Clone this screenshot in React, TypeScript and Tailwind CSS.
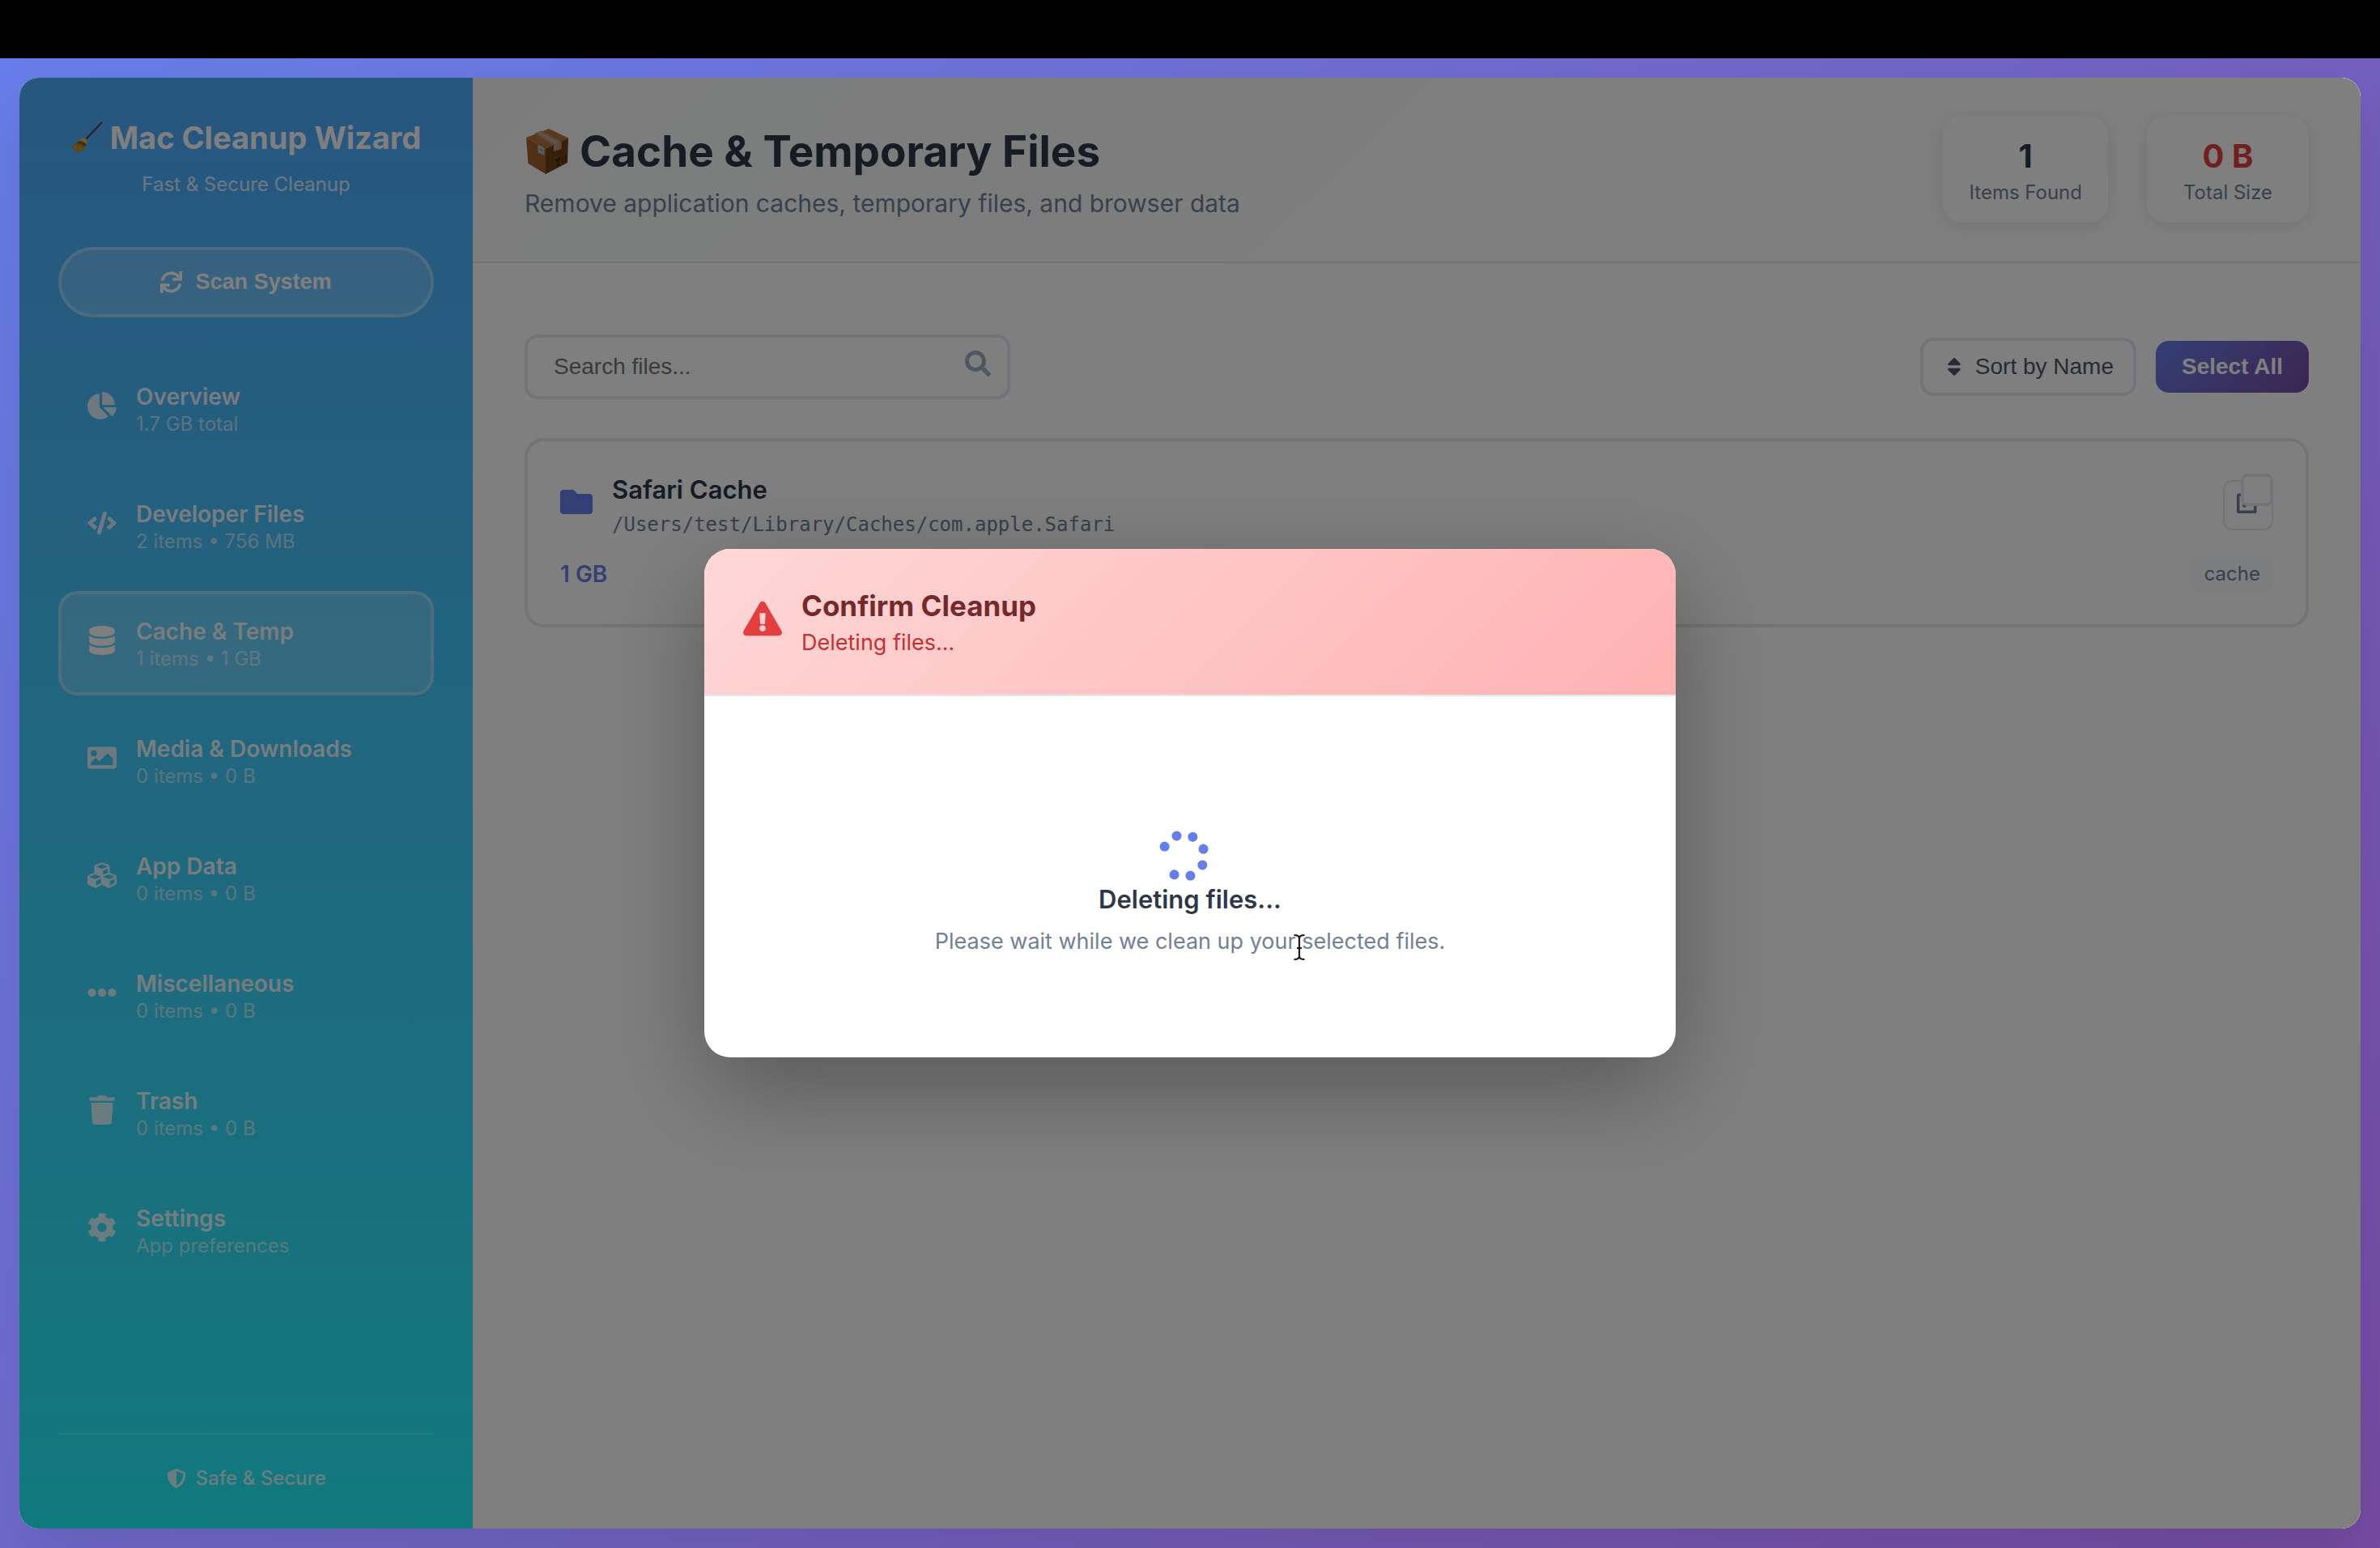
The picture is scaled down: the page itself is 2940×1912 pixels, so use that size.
import type { ReactNode } from "react";
import type { IconType } from "react-icons";
import {
  FaChartPie,
  FaCode,
  FaCog,
  FaCubes,
  FaDatabase,
  FaEllipsisH,
  FaExclamationTriangle,
  FaExternalLinkAlt,
  FaFolder,
  FaImage,
  FaSearch,
  FaShieldAlt,
  FaSort,
  FaSpinner,
  FaSync,
  FaTrash,
} from "react-icons/fa";

type NavEntry = { name: string; detail: string; Icon: IconType; active?: boolean };

const navEntries: NavEntry[] = [
  { name: "Overview", detail: "1.7 GB total", Icon: FaChartPie },
  { name: "Developer Files", detail: "2 items • 756 MB", Icon: FaCode },
  { name: "Cache & Temp", detail: "1 items • 1 GB", Icon: FaDatabase, active: true },
  { name: "Media & Downloads", detail: "0 items • 0 B", Icon: FaImage },
  { name: "App Data", detail: "0 items • 0 B", Icon: FaCubes },
  { name: "Miscellaneous", detail: "0 items • 0 B", Icon: FaEllipsisH },
  { name: "Trash", detail: "0 items • 0 B", Icon: FaTrash },
  { name: "Settings", detail: "App preferences", Icon: FaCog },
];

function Broom() {
  return (
    <svg viewBox="0 0 40 40" className="size-10 shrink-0" aria-hidden="true">
      <path d="M37.5 1.5 L19 21" stroke="#5a3a30" strokeWidth="2" strokeLinecap="round" />
      <path d="M12 21 C15 19.5 19 20.5 19.5 25 C19 30 15 36 11 39 C7 38 2 34 0.5 30 C5 28 9 25 12 21Z" fill="#b38a2c" />
      <path d="M12 21 C15 19.5 19 20.5 19.5 25 L18.5 28 C16 25.5 13 24 9.5 24Z" fill="#d9bd5e" />
      <path d="M9.5 24 C13 24 16 25.5 18.5 28 L17 31.5 C14 28.5 10 27 6.5 26.8Z" fill="#8a5a24" />
      <path d="M5 30 L8 35 M9 30 L12 36 M3 30 L5 33" stroke="#d8b24a" strokeWidth="1" />
    </svg>
  );
}

function Parcel() {
  return (
    <svg viewBox="0 0 56 60" className="h-[60px] w-14 shrink-0" aria-hidden="true">
      <path d="M2 13 L30 2 L54 13.5 L26 26.5Z" fill="#b0713e" />
      <path d="M2 13 L26 26.5 V58 L4.5 45Z" fill="#a5612f" />
      <path d="M26 26.5 L54 13.5 L53 44 L26 58Z" fill="#6f4318" />
      <path d="M12.5 7.5 L20.5 4.5 L45.5 18 V27 L36 30 V22.5Z" fill="#b99679" />
      <path d="M15 6.5 L18 5.4 L42 19.5 L39 21Z" fill="#c9ab92" />
      <path d="M16.5 22 L24.5 26 V35 L16.5 31.5Z" fill="#b9b9b4" />
      <path d="M18 27 L23 29.5" stroke="#6d6d6a" strokeWidth="1" />
      <path d="M38.5 40 L44.5 37 C44.5 40 43 42 41.5 42.5 C40 42.5 38.5 42 38.5 40Z" fill="#3c220b" />
      <path d="M41.5 42 V47 M39.5 48 L43.5 46 M47 36.5 V44 M51 34.5 V42" stroke="#3c220b" strokeWidth="1.4" />
    </svg>
  );
}

function Sidebar() {
  return (
    <aside className="flex w-[560px] shrink-0 flex-col bg-linear-to-b from-[#4facfe] to-[#20f2fc] p-12 text-white">
      <div className="flex flex-col items-center gap-3 text-center">
        <h1 className="flex items-center gap-2 text-[38px] leading-[52px] font-bold">
          <Broom />
          Mac Cleanup Wizard
        </h1>
        <p className="text-2xl leading-[40px] opacity-80">Fast &amp; Secure Cleanup</p>
      </div>

      <button
        type="button"
        className="mt-[57px] flex h-[87px] items-center justify-center gap-4 rounded-full border-4 border-white/30 bg-white/20 font-['Liberation_Sans',sans-serif] text-[27px] font-bold"
      >
        <FaSync className="size-[27px]" />
        Scan System
      </button>

      <nav className="mt-12 flex flex-col gap-4">
        {navEntries.map(({ name, detail, Icon, active }) => (
          <a
            key={name}
            href="#"
            className={
              active
                ? "flex items-center gap-6 rounded-3xl border-4 border-white/30 bg-white/20 px-8 py-6"
                : "flex items-center gap-6 rounded-3xl border-4 border-transparent px-8 py-6"
            }
          >
            <span className="pb-2">
              <Icon className={active ? "size-9" : "size-9 opacity-80"} />
            </span>
            <span className="flex flex-col pt-[5px]">
              <span className="text-[28px] leading-[34px] font-semibold opacity-90">{name}</span>
              <span className="text-2xl leading-[34px] opacity-60">{detail}</span>
            </span>
          </a>
        ))}
      </nav>

      <div className="mt-auto flex items-center justify-center gap-3 border-t-2 border-white/20 pt-10 text-2xl leading-[28px] font-medium">
        <FaShieldAlt className="size-6 opacity-80" />
        <span className="opacity-80">Safe &amp; Secure</span>
      </div>
    </aside>
  );
}

function Stat({ value, label, danger }: { value: string; label: string; danger?: boolean }) {
  return (
    <div className="flex min-w-[200px] flex-col items-center gap-1 rounded-3xl bg-white px-8 pt-[26px] pb-5 shadow-[0_4px_20px_rgba(0,0,0,0.1)]">
      <span className={danger ? "text-[40px] leading-[48px] font-bold text-[#e53e3e]" : "text-[40px] leading-[48px] font-bold text-[#2d3748]"}>
        {value}
      </span>
      <span className="text-2xl leading-[34px] text-[#718096]">{label}</span>
    </div>
  );
}

function Toolbar() {
  return (
    <div className="flex items-center justify-between gap-6">
      <div className="relative w-[600px]">
        <input
          type="text"
          aria-label="Search files"
          placeholder="Search files..."
          className="h-20 w-full rounded-2xl border-4 border-[#e2e8f0] bg-white px-8 font-['Liberation_Sans',sans-serif] text-[28px] placeholder:text-[#757575]"
        />
        <FaSearch className="absolute top-5 right-6 size-8 text-[#a0aec0]" />
      </div>
      <div className="flex items-center gap-6 font-['Liberation_Sans',sans-serif] text-[28px]">
        <button
          type="button"
          className="flex h-[72px] items-center gap-3 rounded-2xl border-4 border-[#e2e8f0] bg-white px-6 text-[#4a5568]"
        >
          <FaSort className="size-7" />
          Sort by Name
        </button>
        <button
          type="button"
          className="h-16 rounded-2xl bg-linear-135 from-[#667eea] to-[#764ba2] px-8 font-bold text-white"
        >
          Select All
        </button>
      </div>
    </div>
  );
}

function FileCard() {
  return (
    <article className="relative rounded-3xl border-4 border-[#e2e8f0] bg-white p-10">
      <div className="flex items-start gap-6">
        <FaFolder className="mt-[15px] size-10 shrink-0 text-[#667eea]" />
        <div className="flex-1">
          <h3 className="text-[31px] leading-[40px] font-semibold text-[#2d3748]">Safari Cache</h3>
          <p className="mt-2 font-['DejaVu_Sans_Mono',monospace] text-2xl leading-[30px] text-[#718096]">
            /Users/test/Library/Caches/com.apple.Safari
          </p>
        </div>
        <button
          type="button"
          aria-label="Open location"
          className="mt-2 flex size-[62px] items-center justify-center rounded-xl border-2 border-[#e2e8f0] pb-2 text-[#718096]"
        >
          <FaExternalLinkAlt className="size-7" />
        </button>
      </div>
      <input
        type="checkbox"
        aria-label="Select Safari Cache"
        className="absolute top-10 right-10 size-10 appearance-none rounded-lg border-4 border-[#e2e8f0] bg-white"
      />
      <div className="mt-6 flex items-center justify-between">
        <span className="text-[28px] leading-[36px] font-semibold text-[#667eea]">1 GB</span>
        <span className="rounded-xl bg-[#f7fafc] px-4 py-1 text-2xl leading-[36px] text-[#718096]">cache</span>
      </div>
    </article>
  );
}

function TextCursor() {
  return (
    <svg viewBox="0 0 16 34" className="absolute top-[475px] left-[727px] h-[34px] w-4" aria-hidden="true">
      <path
        d="M1.5 2 C5 2 8 3 8 6 V28 C8 31 5 32 1.5 32 M14.5 2 C11 2 8 3 8 6 M14.5 32 C11 32 8 31 8 28 M5 18 H11"
        fill="none"
        stroke="white"
        strokeWidth="4"
      />
      <path
        d="M1.5 2 C5 2 8 3 8 6 V28 C8 31 5 32 1.5 32 M14.5 2 C11 2 8 3 8 6 M14.5 32 C11 32 8 31 8 28 M5 18 H11"
        fill="none"
        stroke="#1a1a1a"
        strokeWidth="2.2"
      />
    </svg>
  );
}

function ConfirmDialog() {
  return (
    <div className="absolute inset-0 flex items-center justify-center bg-black/50">
      <section
        role="dialog"
        aria-modal="true"
        aria-labelledby="dialog-title"
        className="relative w-[1200px] overflow-hidden rounded-[32px] bg-white shadow-[0_40px_120px_rgba(0,0,0,0.3)]"
      >
        <header className="flex items-center gap-6 border-b-2 border-[#e2e8f0] bg-linear-135 from-[#fed7d7] to-[#feb2b2] px-12 py-11">
          <span className="pb-2">
            <FaExclamationTriangle className="size-12 text-[#e53e3e]" />
          </span>
          <div>
            <h2 id="dialog-title" className="text-[35px] leading-[52px] font-bold text-[#742a2a]">
              Confirm Cleanup
            </h2>
            <p className="text-[27px] leading-[40px] text-[#c53030]">Deleting files...</p>
          </div>
        </header>
        <div className="flex flex-col items-center px-12 pt-[165px] pb-[121px] text-center">
          <FaSpinner className="mr-4 size-16 rotate-[206deg] text-[#667eea]" />
          <h3 className="text-[31px] leading-[44px] font-semibold text-[#2d3748]">Deleting files...</h3>
          <p className="mt-2 text-[27px] leading-[44px] text-[#718096]">
            Please wait while we clean up your selected files.
          </p>
        </div>
        <TextCursor />
      </section>
    </div>
  );
}

function Window({ children }: { children: ReactNode }) {
  return (
    <div className="flex min-h-screen flex-col bg-black font-['Inter',sans-serif]">
      <div className="h-[72px]" />
      <div className="flex flex-1 bg-linear-135 from-[#667eea] to-[#764ba2] p-6">
        <div className="relative flex flex-1 overflow-hidden rounded-3xl bg-white shadow-[0_40px_80px_rgba(0,0,0,0.1)]">
          {children}
        </div>
      </div>
    </div>
  );
}

export default function App() {
  return (
    <Window>
      <Sidebar />
      <main className="flex flex-1 flex-col bg-white">
        <header className="flex items-center justify-between border-b-2 border-[#e6e6e6] bg-linear-135 from-[#f8f9fa] to-white px-16 pt-[47px] pb-12">
          <div className="pt-2">
            <h2 className="flex items-center gap-3 text-[53px] leading-[68px] font-bold text-[#2d3748]">
              <Parcel />
              Cache &amp; Temporary Files
            </h2>
            <p className="mt-2 text-[30px] leading-[44px] text-[#718096]">
              Remove application caches, temporary files, and browser data
            </p>
          </div>
          <div className="flex gap-12">
            <Stat value="1" label="Items Found" />
            <Stat value="0 B" label="Total Size" danger />
          </div>
        </header>
        <div className="flex flex-col gap-12 px-16 pt-[88px]">
          <Toolbar />
          <FileCard />
        </div>
      </main>
      <ConfirmDialog />
    </Window>
  );
}
